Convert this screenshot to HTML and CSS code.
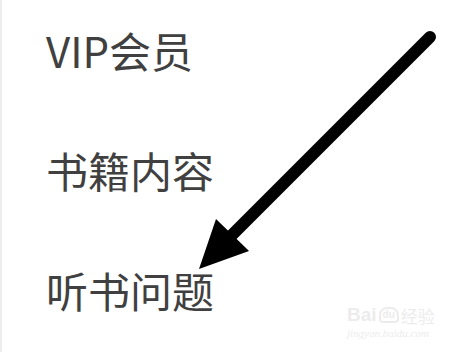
FILE: index.html
```html
<!DOCTYPE html>
<html lang="zh-cn">
<head>
  <meta charset="UTF-8">
  <title>设置</title>
  <link rel="stylesheet" href="styles.css">
</head>
<body>

  <!-- 菜单 -->
  <ul class="menu">
    <li class="menu-item">VIP会员</li>
    <li class="menu-item">书籍内容</li>
    <li class="menu-item">听书问题</li>
  </ul>

  <!-- 指示箭头 -->
  <svg class="arrow" width="464" height="352" viewBox="0 0 464 352">
    <line x1="430" y1="37" x2="228" y2="239" stroke="#000" stroke-width="12" stroke-linecap="round" />
    <polygon points="199,269 216,219 249,251" fill="#000" />
  </svg>

  <!-- 水印 -->
  <div class="watermark">
    <div class="wm-top">
      <span class="wm-bai">Bai</span>
      <span class="wm-du">du</span>
      <span class="wm-jy">经验</span>
    </div>
    <div class="wm-url">jingyan.baidu.com</div>
  </div>

</body>
</html>
```

FILE: styles.css
```css
html, body { margin: 0; padding: 0; background: #fff; }
body {
  width: 462px;
  height: 352px;
  border-left: 2px solid #ededed;
  position: relative;
  overflow: hidden;
  font-family: "Noto Sans CJK SC", "Noto Sans", sans-serif;
}
.menu {
  list-style: none;
  margin: 0;
  padding: 10px 0 0 44px;
  display: flex;
  flex-direction: column;
  gap: 40px;
}
.menu-item {
  height: 80px;
  line-height: 80px;
  font-size: 42px;
  color: #404040;
}
.arrow {
  position: absolute;
  left: -2px;
  top: 0;
}
.watermark {
  position: absolute;
  left: 345px;
  top: 305px;
  color: #ececec;
  font-family: "Liberation Sans", sans-serif;
}
.wm-top {
  display: flex;
  align-items: center;
  gap: 2px;
  height: 20px;
}
.wm-bai { font-size: 19px; font-weight: bold; }
.wm-du {
  font-size: 10px;
  font-weight: bold;
  border: 2px solid #ececec;
  border-radius: 8px 8px 4px 4px;
  padding: 0 2px;
  line-height: 12px;
}
.wm-jy { font-size: 17px; font-family: "Noto Sans CJK SC", sans-serif; }
.wm-url {
  font-size: 11px;
  font-family: "Liberation Serif", serif;
  font-style: italic;
  margin-top: 2px;
}
```
